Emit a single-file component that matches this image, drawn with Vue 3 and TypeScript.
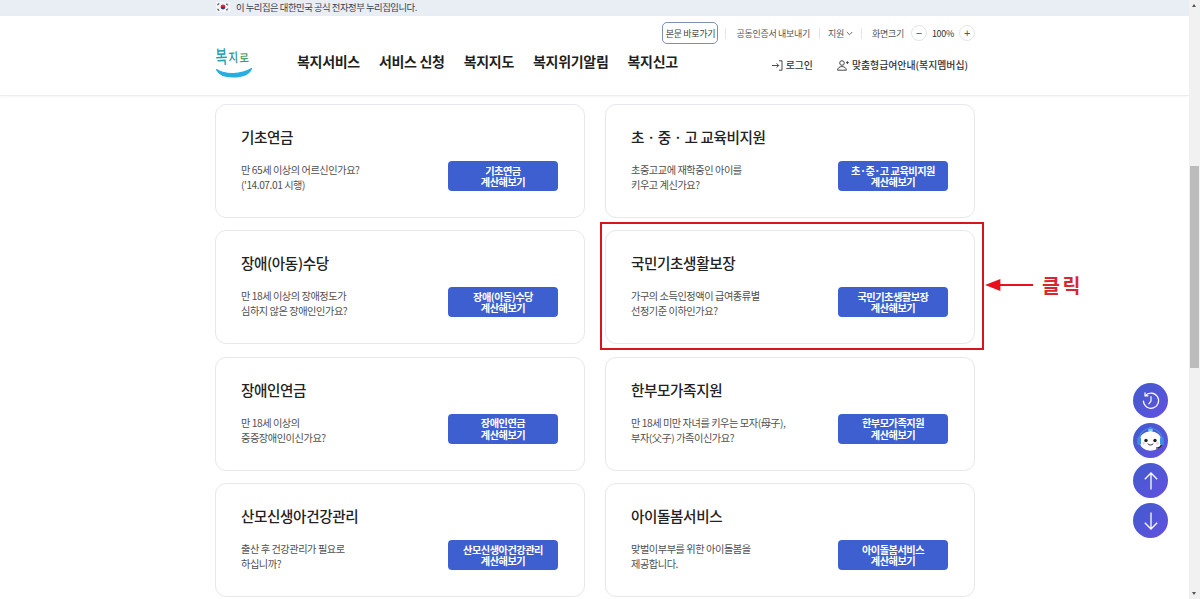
<script setup lang="ts">
interface Card { title: string; lines: string[]; btn: string }
const cards: Card[] = [
  { title: '기초연금', lines: ['만 65세 이상의 어르신인가요?', "('14.07.01 시행)"], btn: '기초연금' },
  { title: '초 · 중 · 고 교육비지원', lines: ['초중고교에 재학중인 아이를', '키우고 계신가요?'], btn: '초·중·고 교육비지원' },
  { title: '장애(아동)수당', lines: ['만 18세 이상의 장애정도가', '심하지 않은 장애인인가요?'], btn: '장애(아동)수당' },
  { title: '국민기초생활보장', lines: ['가구의 소득인정액이 급여종류별', '선정기준 이하인가요?'], btn: '국민기초생활보장' },
  { title: '장애인연금', lines: ['만 18세 이상의', '중증장애인이신가요?'], btn: '장애인연금' },
  { title: '한부모가족지원', lines: ['만 18세 미만 자녀를 키우는 모자(母子),', '부자(父子) 가족이신가요?'], btn: '한부모가족지원' },
  { title: '산모신생아건강관리', lines: ['출산 후 건강관리가 필요로', '하십니까?'], btn: '산모신생아건강관리' },
  { title: '아이돌봄서비스', lines: ['맞벌이부부를 위한 아이돌봄을', '제공합니다.'], btn: '아이돌봄서비스' }
]
const navs = ['복지서비스', '서비스 신청', '복지지도', '복지위기알림', '복지신고']
</script>

<template>
  <div class="page">
    <div class="main">
      <div class="banner">
        <div class="wrap banner-in">
          <svg class="flag" width="14" height="10" viewBox="0 0 14 10">
            <rect width="14" height="10" fill="#f4f6fa" />
            <path d="M4.6 5a2.4 2.4 0 0 1 4.8 0z" fill="#d8283c" />
            <path d="M4.6 5a2.4 2.4 0 0 0 4.8 0z" fill="#24408e" />
            <path d="M1.2 2.6l1.6-1.4M1.8 3.2l1.6-1.4M10.6 1.4l1.6 1.4M10 2l1.6 1.4M1.2 7.4l1.6 1.4M1.8 6.8l1.6 1.4M10.6 8.6l1.6-1.4M10 8l1.6-1.4" stroke="#222" stroke-width=".7" />
          </svg>
          <span>이 누리집은 대한민국 공식 전자정부 누리집입니다.</span>
        </div>
      </div>

      <header class="header">
        <div class="wrap">
          <div class="util">
            <a class="skip">본문 바로가기</a>
            <i class="sep sep1"></i>
            <span>공동인증서 내보내기</span>
            <i class="sep sep2"></i>
            <span class="support">지원
              <svg width="7" height="5" viewBox="0 0 7 5"><path d="M.8 1l2.7 2.7L6.2 1" fill="none" stroke="#555" stroke-width=".9" /></svg>
            </span>
            <i class="sep sep3"></i>
            <span>화면크기</span>
            <b class="zoom zoom-minus">−</b>
            <span class="pct">100%</span>
            <b class="zoom">+</b>
          </div>
          <div class="mainrow">
            <div class="logo">
              <div class="logo-text">
                <span class="lg1">복</span><span class="lg2">지</span><span class="lg3">로</span>
              </div>
              <svg class="smile" width="38" height="11" viewBox="0 0 38 11">
                <path d="M1.5 2.5C10 8 26 8 36.5 1.5C34 7.5 26 10 18 10C10 10 4 8 1.5 2.5z" fill="#27aee0" stroke="#27aee0" stroke-width="1.2" stroke-linejoin="round" />
              </svg>
            </div>
            <nav class="nav">
              <a v-for="n in navs" :key="n">{{ n }}</a>
            </nav>
            <div class="account">
              <span class="acc login">
                <svg width="11" height="11" viewBox="0 0 11 11" fill="none" stroke="#333" stroke-width=".9">
                  <path d="M0 5.5h6.5M4.6 3.4l2.1 2.1-2.1 2.1M7 .8h3v9.4H7" />
                </svg>
                로그인
              </span>
              <span class="acc">
                <svg width="12" height="11" viewBox="0 0 12 11" fill="none" stroke="#333" stroke-width=".9">
                  <circle cx="5" cy="3" r="2.3" /><path d="M.6 10.2c.3-2.6 2-3.6 4.4-3.6s4 1 4.4 3.6zM9 2.6h2.8M10.4 1.2V4" />
                </svg>
                맞춤형급여안내(복지멤버십)
              </span>
            </div>
          </div>
        </div>
      </header>

      <section class="wrap grid">
        <article v-for="c in cards" :key="c.title" class="card">
          <h3>{{ c.title }}</h3>
          <div class="card-body">
            <p>{{ c.lines[0] }}<br />{{ c.lines[1] }}</p>
            <button type="button">{{ c.btn }}<br />계산해보기</button>
          </div>
        </article>
      </section>

      <div class="highlight"></div>
      <div class="callout">
        <svg width="52" height="14" viewBox="0 0 52 14">
          <path d="M0 7L16 .8v5.2h34v2H16v5.2z" fill="#e8101a" />
        </svg>
        <span>클릭</span>
      </div>
    </div>

    <aside class="scrollbar">
      <i class="sb-up"></i>
      <div class="thumb"></div>
      <i class="sb-down"></i>
    </aside>

    <div class="floats">
      <a class="fab">
        <svg width="20" height="20" viewBox="0 0 20 20" fill="none" stroke="#fff" stroke-width="1.2" stroke-linecap="round">
          <path d="M4.3 4.6A7.6 7.6 0 1 1 2.4 10M4 1.8v3h3M10 5.6V10l-2.2 2.8" />
        </svg>
      </a>
      <a class="fab bot">
        <svg width="31" height="31" viewBox="0 0 31 31">
          <circle cx="15.5" cy="5" r="2.4" fill="#8fc8f0" />
          <ellipse cx="15.5" cy="16" rx="11" ry="9.8" fill="#fff" />
          <path d="M4 15a11.5 11.5 0 0 1 23 0" fill="none" stroke="#3d8fe0" stroke-width="1.2" />
          <rect x="2.2" y="12" width="3.8" height="8" rx="1.7" fill="#3d8fe0" />
          <rect x="25" y="12" width="3.8" height="8" rx="1.7" fill="#3d8fe0" />
          <circle cx="11" cy="15.5" r="1.7" fill="#222" />
          <circle cx="20" cy="15.5" r="1.7" fill="#222" />
          <path d="M13 19c1.4 1.5 3.6 1.5 5 0" fill="none" stroke="#333" stroke-width="1" stroke-linecap="round" />
          <path d="M26.5 20c-.8 2-2.6 3-5.5 3" fill="none" stroke="#222" stroke-width="1.1" />
          <circle cx="8.5" cy="18.5" r="1.4" fill="#f6d3dc" /><circle cx="22.5" cy="18.5" r="1.4" fill="#f6d3dc" />
        </svg>
      </a>
      <a class="fab">
        <svg width="16" height="20" viewBox="0 0 16 20" fill="none" stroke="#fff" stroke-width="1.3"><path d="M8 18.5V2M1.8 8.2L8 2l6.2 6.2" /></svg>
      </a>
      <a class="fab">
        <svg width="16" height="20" viewBox="0 0 16 20" fill="none" stroke="#fff" stroke-width="1.3"><path d="M8 1.5V18M1.8 11.8L8 18l6.2-6.2" /></svg>
      </a>
    </div>
  </div>
</template>

<style>
html, body { margin: 0; padding: 0; overflow: hidden; background: #fff; }
</style>

<style scoped>
.page {
  position: relative;
  display: flex;
  width: 1200px;
  height: 599px;
  overflow: hidden;
  font-family: "Noto Sans CJK KR", "Noto Sans", sans-serif;
  color: #222;
}
.main { position: relative; flex: 1; min-width: 0; overflow: hidden; }
.wrap { width: 760px; margin-left: 215px; }
.banner { height: 16px; background: #e9edf4; }
.banner-in {
  display: flex;
  align-items: center;
  gap: 6px;
  height: 14px;
  font-size: 9.4px;
  letter-spacing: -.5px;
  color: #3a3f4a;
}
.flag { margin-left: 1px; }
.header {
  height: 80px;
  box-sizing: border-box;
  background: #fff;
  border-bottom: 1px solid #eceef1;
  box-shadow: 0 1px 3px rgba(0, 0, 0, .04);
}
.util {
  display: flex;
  justify-content: flex-end;
  align-items: center;
  height: 22px;
  padding-top: 6px;
  font-size: 9px;
  letter-spacing: -.3px;
  color: #555;
  white-space: nowrap;
}
.skip {
  width: 56px;
  height: 22px;
  box-sizing: border-box;
  display: flex;
  align-items: center;
  justify-content: center;
  border: 1px solid #7f8fb0;
  border-radius: 5px;
  color: #444;
}
.sep { width: 1px; height: 11px; background: #e3e5ea; }
.sep1 { margin: 0 10px 0 7px; }
.sep2 { margin: 0 8px 0 9px; }
.sep3 { margin: 0 10px 0 8px; }
.support { display: inline-flex; align-items: center; gap: 2px; }
.zoom {
  width: 14px;
  height: 14px;
  margin-left: 7px;
  border: 1px solid #e2e5ea;
  border-radius: 50%;
  display: flex;
  align-items: center;
  justify-content: center;
  font-family: "Liberation Sans", sans-serif;
  font-weight: 400;
  font-size: 11px;
  line-height: 1;
  color: #555;
}
.zoom-minus { margin-right: 5px; }
.pct { margin-right: -2px; color: #333; }
.mainrow { display: flex; align-items: flex-start; height: 50px; }
.logo { position: relative; width: 82px; height: 40px; margin-top: 1px; }
.logo-text {
  display: flex;
  align-items: flex-end;
  gap: 1px;
  height: 22px;
  padding-left: 1px;
  font-weight: 500;
  line-height: 14px;
  transform: rotate(-3deg);
  transform-origin: left bottom;
  white-space: nowrap;
}
.lg1 { font-size: 13px; color: #2a9fb4; transform: scaleY(1.45); transform-origin: bottom; }
.lg2 { font-size: 10.5px; color: #2b8f8c; transform: scaleY(1.25); transform-origin: bottom; }
.lg3 { font-size: 10.5px; color: #3f9a5e; transform: scaleY(1.1); transform-origin: bottom; }
.smile { position: absolute; left: 0; top: 22px; }
.nav {
  display: flex;
  gap: 19px;
  margin-top: 7px;
  font-size: 14px;
  line-height: 20px;
  font-weight: 700;
  color: #1f1f1f;
  letter-spacing: -.3px;
  white-space: nowrap;
}
.account {
  margin-left: auto;
  display: flex;
  gap: 24px;
  margin-top: 11px;
  padding-right: 7px;
  font-size: 9.9px;
  line-height: 20px;
  font-weight: 500;
  color: #333;
  white-space: nowrap;
}
.acc { display: inline-flex; align-items: center; gap: 3px; }
.grid {
  display: grid;
  grid-template-columns: 370px 370px;
  column-gap: 20px;
  row-gap: 12.4px;
  margin-top: 8px;
}
.card {
  height: 114px;
  box-sizing: border-box;
  padding: 21px 26px 0 25px;
  border: 1px solid #e6e8ec;
  border-radius: 11px;
  background: #fff;
}
.card h3 {
  margin: 0;
  font-size: 14.6px;
  line-height: 22px;
  font-weight: 500;
  color: #222;
  letter-spacing: -.4px;
  white-space: nowrap;
}
.card-body {
  display: flex;
  justify-content: space-between;
  align-items: flex-start;
  margin-top: 13px;
}
.card p {
  margin: 1px 0 0;
  font-size: 10.2px;
  line-height: 15px;
  letter-spacing: -.45px;
  color: #4f4f4f;
  white-space: nowrap;
}
.card button {
  width: 110px;
  height: 30px;
  padding: 0;
  border: 0;
  border-radius: 4px;
  background: #3d5fd0;
  color: #fff;
  font-family: inherit;
  font-size: 10.2px;
  line-height: 11.5px;
  letter-spacing: -.5px;
  font-weight: 700;
  text-align: center;
}
.highlight {
  position: absolute;
  left: 600px;
  top: 222px;
  width: 384px;
  height: 128px;
  box-sizing: border-box;
  border: 2px solid #d8141c;
}
.callout {
  position: absolute;
  left: 985px;
  top: 272px;
  display: flex;
  align-items: center;
  gap: 7px;
  color: #d8262e;
  font-size: 19.5px;
  line-height: 26px;
  font-weight: 700;
  letter-spacing: 2.5px;
  white-space: nowrap;
}
.callout svg { flex: none; width: 50px; }
.scrollbar {
  position: relative;
  flex: none;
  width: 11px;
  background: #f1f1f1;
}
.thumb {
  position: absolute;
  left: 1px;
  right: 1px;
  top: 166px;
  height: 202px;
  background: #bcbcbc;
}
.sb-up, .sb-down {
  position: absolute;
  left: 3px;
  width: 0;
  height: 0;
  border-left: 2.5px solid transparent;
  border-right: 2.5px solid transparent;
}
.sb-up { top: 4px; border-bottom: 3px solid #555; }
.sb-down { bottom: 4px; border-top: 3px solid #555; }
.floats {
  position: absolute;
  left: 1133px;
  top: 383px;
  display: flex;
  flex-direction: column;
  gap: 5px;
}
.fab {
  width: 35px;
  height: 35px;
  border-radius: 50%;
  display: flex;
  align-items: center;
  justify-content: center;
  background: linear-gradient(135deg, #3f5ccb, #6450e2);
}
</style>
